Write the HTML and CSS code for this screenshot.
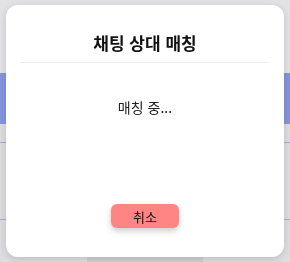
FILE: index.html
```html
<!DOCTYPE html>
<html lang="ko">
<head>
    <meta charset="UTF-8">
    <meta name="viewport" content="width=device-width, initial-scale=1.0">
    <title>채팅</title>
    <link rel="stylesheet" href="styles.css">
</head>
<body>
<div class="page">
    <div class="top-space"></div>
    <div class="banner"></div>
    <div class="list-row"></div>
    <div class="list-row tall"></div>
    <div class="bottom">
        <button class="page-button">신청하기</button>
    </div>
</div>

<div class="overlay">
    <div class="modal">
        <div class="modal-header">
            <h2>채팅 상대 매칭</h2>
        </div>
        <p class="status">매칭 중...</p>
        <div class="modal-footer">
            <button class="cancel-button">취소</button>
        </div>
    </div>
</div>
</body>
</html>
```

FILE: styles.css
```css
*{
    box-sizing: border-box;
}
body{
    margin: 0;
    font-family: "Noto Sans CJK KR", "Noto Sans", sans-serif;
    background-color: #f6f6f9;
    overflow: hidden;
}

.page{
    height: 262px;
}
.top-space{
    height: 73px;
    background-color: #fcfcff;
}
.banner{
    height: 51px;
    background-color: #95a5f7;
}
.list-row{
    height: 19px;
    border-bottom: 1px solid #b8c2f2;
}
.list-row.tall{
    height: 77px;
}
.bottom{
    display: flex;
    justify-content: center;
    padding-top: 36px;
}
.page-button{
    width: 116px;
    height: 30px;
    border: none;
    background-color: #e6e6e6;
    color: #333;
    font-family: inherit;
    font-size: 16px;
    line-height: 14px;
    padding: 0;
    align-self: flex-start;
}

.overlay{
    position: fixed;
    top: 0;
    left: 0;
    right: 0;
    bottom: 0;
    background-color: rgba(0, 0, 0, 0.1);
    display: flex;
    justify-content: center;
    align-items: center;
}
.modal{
    width: 278px;
    height: 252px;
    background-color: #fff;
    border-radius: 12px;
    box-shadow: 0 2px 8px rgba(0, 0, 0, 0.15);
    display: flex;
    flex-direction: column;
    padding: 0 14px;
}
.modal-header{
    padding-top: 26px;
    padding-bottom: 7px;
    border-bottom: 1px solid #eeeeee;
}
h2{
    margin: 0;
    font-size: 17px;
    line-height: 24px;
    font-weight: bold;
    text-align: center;
    color: #111;
}
.status{
    margin: 34px 0 0 0;
    font-size: 14px;
    line-height: 20px;
    text-align: center;
    color: #222;
}
.modal-footer{
    margin-top: auto;
    display: flex;
    justify-content: center;
    padding-bottom: 29px;
}
.cancel-button{
    width: 68px;
    height: 24px;
    border: none;
    border-radius: 6px;
    background-color: #ff8585;
    color: #111;
    font-family: inherit;
    font-size: 13px;
    padding: 0;
    box-shadow: 0 3px 6px rgba(0, 0, 0, 0.2);
}
```
